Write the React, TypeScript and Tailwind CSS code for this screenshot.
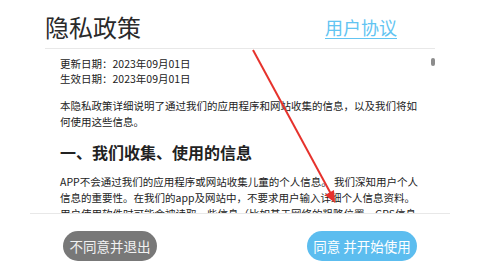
export default function App() {
  return (
    <div className="relative h-[270px] w-[480px] overflow-hidden bg-white font-['Noto_Sans_CJK_SC','Noto_Sans',sans-serif] text-[#222]">
      <header className="mx-[45px] flex h-[49px] items-center justify-between border-b border-[#e8e8e8] pt-[5px] pr-[38px]">
        <h1 className="text-[24px] leading-none font-normal text-[#2a2a2a]">隐私政策</h1>
        <a href="#" className="text-[18px] leading-none text-[#62c4f2] underline underline-offset-[3px] decoration-1">
          用户协议
        </a>
      </header>

      <section className="relative mx-[45px] h-[164px] overflow-hidden px-[15px] pt-[7px]">
        <div className="absolute right-0 top-[9px] h-[8px] w-[4px] rounded-full bg-[#8c8c8c]" />
        <div className="text-[10.5px] leading-[15px] whitespace-nowrap">
          <p>更新日期：2023年09月01日</p>
          <p>生效日期：2023年09月01日</p>
        </div>
        <div className="mt-[12px] text-[10.5px] leading-[16px] whitespace-nowrap">
          <p>本隐私政策详细说明了通过我们的应用程序和网站收集的信息，以及我们将如</p>
          <p>何使用这些信息。</p>
        </div>
        <h2 className="mt-[11px] text-[16px] leading-[22px] font-bold whitespace-nowrap">一、我们收集、使用的信息</h2>
        <div className="mt-[11px] text-[10.5px] leading-[16px] whitespace-nowrap">
          <p>APP不会通过我们的应用程序或网站收集儿童的个人信息。 我们深知用户个人</p>
          <p>信息的重要性。在我们的app及网站中，不要求用户输入详细个人信息资料。</p>
          <p>用户使用软件时可能会被读取一些信息（比如基于网络的粗略位置，GPS信息</p>
        </div>
      </section>

      <footer className="mx-[30px] flex justify-between border-t border-[#e8e8e8] px-[33px] pt-[17px]">
        <button className="flex h-[30px] w-[94px] items-center justify-center rounded-full bg-[#787878] text-[13.5px] text-[#f2f2f2]">
          不同意并退出
        </button>
        <button className="flex h-[30px] w-[110px] items-center justify-center rounded-full bg-[#5cbdef] text-[13.5px] text-white">
          同意 并开始使用
        </button>
      </footer>

      <svg className="pointer-events-none absolute left-0 top-0" width="480" height="270" viewBox="0 0 480 270">
        <line x1="253" y1="50" x2="331" y2="194" stroke="#e6322c" strokeWidth="2" />
        <polygon points="335,203 325,195 334,190" fill="#e6322c" />
      </svg>
    </div>
  );
}
